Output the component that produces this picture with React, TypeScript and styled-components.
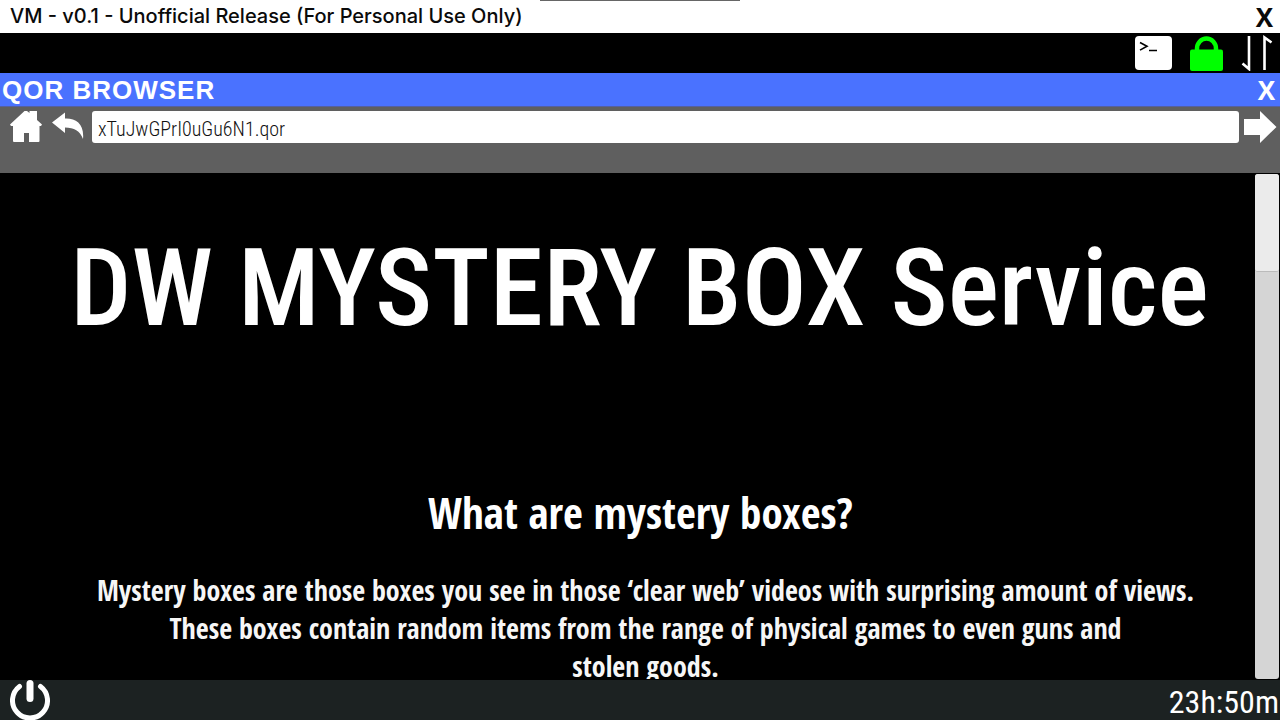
import React, { useState } from 'react';
import styled, { createGlobalStyle } from 'styled-components';

const narrow = '"Roboto Condensed", "Roboto", sans-serif';
const humanist = '"Open Sans Condensed", "Open Sans", sans-serif';

const GlobalStyle = createGlobalStyle`
  *, *::before, *::after { box-sizing: border-box; }
  body { margin: 0; background: #000; }
`;

const Screen = styled.div`
  display: flex;
  flex-direction: column;
  height: 100vh;
  overflow: hidden;
  background: #000;
`;

const TitleBar = styled.header`
  position: relative;
  display: flex;
  align-items: center;
  justify-content: space-between;
  height: 33px;
  padding: 0 7px 0 10px;
  background: #fff;
  color: #0a0a0a;
`;

const VmTitle = styled.span`
  padding-bottom: 2px;
  font: 500 20px/30px "Inter", sans-serif;
  white-space: nowrap;
`;

const Notch = styled.span`
  position: absolute;
  top: 0;
  left: 50%;
  width: 200px;
  height: 1px;
  margin-left: -100px;
  background: #666;
`;

const IconButton = styled.button`
  display: flex;
  flex: none;
  padding: 0;
  border: 0;
  background: none;
  color: inherit;
  cursor: pointer;

  svg { display: block; }
`;

const CloseButton = styled(IconButton)`
  font: 700 26px/32px "Open Sans", sans-serif;
`;

const Tray = styled.div`
  display: flex;
  align-items: center;
  justify-content: flex-end;
  gap: 18px;
  height: 40px;
  padding-right: 7px;
  color: #fff;
`;

const BrowserBar = styled.div`
  display: flex;
  align-items: center;
  justify-content: space-between;
  height: 34px;
  padding: 1px 5px 0 2px;
  border-bottom: 1px solid #5560a0;
  background: #4a72ff;
  color: #fff;
`;

const BrowserTitle = styled.span`
  font: 700 26px/32px "Liberation Sans", Arial, sans-serif;
  letter-spacing: 1px;
`;

const Toolbar = styled.form`
  display: flex;
  align-items: flex-start;
  height: 66px;
  padding: 3px 3px 0 10px;
  background: #5f5f5f;
  color: #fff;
`;

const Address = styled.input`
  flex: 1;
  min-width: 0;
  height: 32px;
  margin: 1px 5px 0 8px;
  padding: 3px 6px 0;
  border: 0;
  border-radius: 3px;
  outline: 0;
  background: #fff;
  color: #111;
  font: 300 20px/28px ${narrow};
`;

const BackSlot = styled.span`
  margin-left: 10px;
`;

const Viewport = styled.div`
  display: flex;
  flex: 1;
  min-height: 0;
  padding: 1px 1px 1px 0;
`;

const Page = styled.main`
  flex: 1;
  min-width: 0;
  padding: 49px 24px 0 48px;
  overflow: hidden;
  color: #fff;
  text-align: center;
`;

const PageTitle = styled.h1`
  margin: 0;
  font: 500 108px/130px ${narrow};
  white-space: nowrap;
`;

const Question = styled.h2`
  margin: 132px 0 0;
  padding-left: 2px;
  font: 700 43px/56px ${humanist};
`;

const Answer = styled.p`
  margin: 30px 0 0;
  padding-left: 12px;
  color: #f6f6f6;
  font: 700 28px/38px ${humanist};
`;

const Line = styled.span`
  display: block;
`;

const ScrollTrack = styled.div`
  flex: none;
  width: 24px;
  border-radius: 3px;
  background: #d5d5d5;
`;

const ScrollThumb = styled.div`
  height: 98px;
  border-bottom: 1px solid #bbb;
  border-radius: 3px;
  background: #ebebeb;
`;

const Taskbar = styled.footer`
  display: flex;
  align-items: center;
  justify-content: space-between;
  height: 40px;
  padding: 0 1px 0 10px;
  background: #1c2222;
  color: #fff;
`;

const Clock = styled.time`
  padding-top: 4px;
  font: 400 32px/36px ${narrow};
`;

const TerminalIcon = () => (
  <svg width="37" height="34" viewBox="0 0 37 34" aria-hidden="true">
    <rect width="37" height="34" rx="4" fill="#fff" />
    <path d="M5 6.500l7 3.800-7 3.800M14 14.500h8" fill="none" stroke="#000" strokeWidth="1.600" />
  </svg>
);

const LockIcon = () => (
  <svg width="33" height="36" viewBox="0 0 33 36" aria-hidden="true">
    <path d="M7 17v-3.500a9.500 10 0 0 1 19 0v3.500" fill="none" stroke="#0f0" strokeWidth="4.500" />
    <rect x="0" y="14.500" width="33" height="21.500" rx="2" fill="#0f0" />
  </svg>
);

const TransferIcon = () => (
  <svg width="32" height="36" viewBox="0 0 32 36" aria-hidden="true">
    <path d="M8 1v33L1.500 28.500M23.500 35V2.500l7 5" fill="none" stroke="#fff" strokeWidth="2.600" />
  </svg>
);

const HomeIcon = () => (
  <svg width="32" height="34" viewBox="0 0 32 34" aria-hidden="true">
    <path
      d="M0 14.500L14.500 1H17l2.500 2V1H27v9l5 4.500-1 1.500H29.500v15q0 1-1 1H19V23h-5v9H4q-1 0-1-1V16H1z"
      fill="#fff"
    />
  </svg>
);

const BackIcon = () => (
  <svg width="32" height="32" viewBox="0 0 32 32" aria-hidden="true">
    <path d="M0 12.500L13 2.500v6C24 8 32.500 14 31 29 28 21 22 17.500 13 17.500v5.500z" fill="#fff" />
  </svg>
);

const GoIcon = () => (
  <svg width="33" height="34" viewBox="0 0 33 34" aria-hidden="true">
    <path d="M0 9h16V1l16.500 16L16 33v-8H0z" fill="#fff" />
  </svg>
);

const PowerIcon = () => (
  <svg width="40" height="40" viewBox="0 0 40 40" aria-hidden="true">
    <g fill="none" stroke="#fff" strokeLinecap="round">
      <path d="M9.500 6.500a17.500 17.500 0 1 0 21 0" strokeWidth="5" />
      <path d="M20 3.500v15" strokeWidth="7" />
    </g>
  </svg>
);

export default function App() {
  const [url, setUrl] = useState('xTuJwGPrI0uGu6N1.qor');

  return (
    <Screen>
      <GlobalStyle />
      <TitleBar>
        <VmTitle>VM - v0.1 - Unofficial Release (For Personal Use Only)</VmTitle>
        <Notch />
        <CloseButton type="button">X</CloseButton>
      </TitleBar>
      <Tray>
        <IconButton type="button" aria-label="Terminal"><TerminalIcon /></IconButton>
        <IconButton type="button" aria-label="Security"><LockIcon /></IconButton>
        <IconButton type="button" aria-label="Network"><TransferIcon /></IconButton>
      </Tray>
      <BrowserBar>
        <BrowserTitle>QOR BROWSER</BrowserTitle>
        <CloseButton type="button">X</CloseButton>
      </BrowserBar>
      <Toolbar onSubmit={(event) => event.preventDefault()}>
        <IconButton type="button" aria-label="Home"><HomeIcon /></IconButton>
        <BackSlot>
          <IconButton type="button" aria-label="Back"><BackIcon /></IconButton>
        </BackSlot>
        <Address
          type="text"
          aria-label="Address"
          value={url}
          onChange={(event) => setUrl(event.target.value)}
        />
        <IconButton type="submit" aria-label="Go"><GoIcon /></IconButton>
      </Toolbar>
      <Viewport>
        <Page>
          <PageTitle>DW MYSTERY BOX Service</PageTitle>
          <Question>What are mystery boxes?</Question>
          <Answer>
            <Line>Mystery boxes are those boxes you see in those ‘clear web’ videos with surprising amount of views.</Line>
            <Line>These boxes contain random items from the range of physical games to even guns and</Line>
            <Line>stolen goods.</Line>
          </Answer>
        </Page>
        <ScrollTrack>
          <ScrollThumb />
        </ScrollTrack>
      </Viewport>
      <Taskbar>
        <IconButton type="button" aria-label="Power"><PowerIcon /></IconButton>
        <Clock>23h:50m</Clock>
      </Taskbar>
    </Screen>
  );
}
